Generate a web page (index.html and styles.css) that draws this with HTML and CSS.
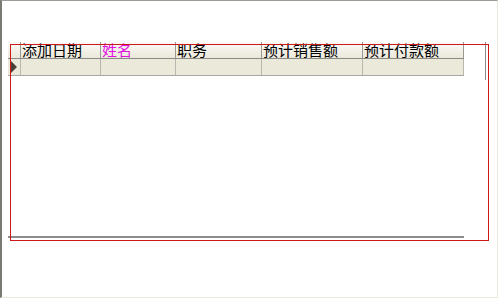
FILE: index.html
```html
<!DOCTYPE html>
<html lang="zh-CN">
<head>
    <meta charset="UTF-8">
    <title>数据表</title>
    <link rel="stylesheet" href="styles.css">
</head>
<body>
    <div class="frame">
        <div class="grid">
            <div class="table">
                <div class="row head-row">
                    <div class="cell row-head"></div>
                    <div class="cell c1">添加日期</div>
                    <div class="cell c2 highlight">姓名</div>
                    <div class="cell c3">职务</div>
                    <div class="cell c4">预计销售额</div>
                    <div class="cell c5">预计付款额</div>
                </div>
                <div class="row data-row">
                    <div class="cell row-head"><span class="pointer"></span></div>
                    <div class="cell c1"></div>
                    <div class="cell c2"></div>
                    <div class="cell c3"></div>
                    <div class="cell c4"></div>
                    <div class="cell c5"></div>
                </div>
                <div class="fill"></div>
            </div>
            <div class="edge"></div>
        </div>
        <!-- selection outline drawn over the grid -->
        <div class="selection"></div>
    </div>
</body>
</html>
```

FILE: styles.css
```css
* {
    margin: 0;
    padding: 0;
    box-sizing: border-box;
}

body {
    width: 500px;
    height: 300px;
    background: #ffffff;
    font-family: "Noto Sans CJK SC", "Noto Sans", sans-serif;
    overflow: hidden;
}

.frame {
    position: relative;
    width: 498px;
    height: 298px;
    border-left: 2px solid #7a7a72;
    border-top: 1px solid #9c9c96;
    border-right: 1px solid #ece9d8;
    border-bottom: 1px solid #ece9d8;
    padding: 41px 0 0 6px;
}

.grid {
    display: flex;
    height: 196px;
}

.table {
    display: flex;
    flex-direction: column;
    width: 456px;
    height: 196px;
    border-bottom: 2px solid #8c8c8c;
}

.row {
    display: flex;
    height: 17px;
}

.head-row {
    background: linear-gradient(#fbfaf6, #ebe8db);
    border-bottom: 1px solid #8a8a86;
}

.data-row {
    background: #ebe9da;
    border-bottom: 1px solid #a8a8a2;
}

.cell {
    height: 16px;
    border-right: 1px solid #b8b8b0;
    font-size: 15px;
    line-height: 15px;
    color: #000000;
    padding-left: 1px;
    white-space: nowrap;
}

.head-row .cell {
    border-right-color: #9a9a94;
}

.row-head {
    width: 13px;
    padding-left: 3px;
    display: flex;
    align-items: center;
}

.c1 { width: 80px; }
.c2 { width: 75px; }
.c3 { width: 86px; }
.c4 { width: 101px; }
.c5 { width: 101px; }

.highlight {
    color: #e010e0;
}

.pointer {
    width: 0;
    height: 0;
    border-left: 6px solid #4a4038;
    border-top: 6px solid transparent;
    border-bottom: 6px solid transparent;
}

.fill {
    flex: 1;
}

.edge {
    width: 1px;
    height: 38px;
    margin-left: 21px;
    background: #8a8a86;
}

.selection {
    position: absolute;
    left: 8px;
    top: 43px;
    width: 479px;
    height: 197px;
    border: 1px solid #cc1a1a;
    pointer-events: none;
}
```
